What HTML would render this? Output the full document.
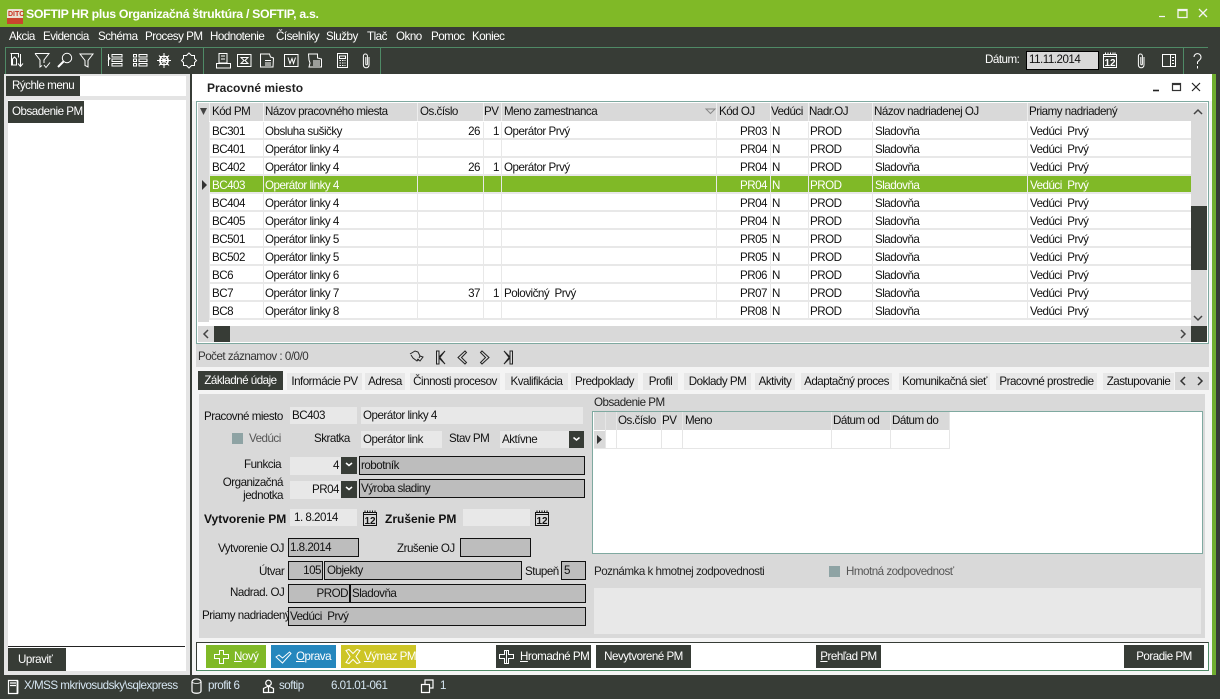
<!DOCTYPE html>
<html><head><meta charset="utf-8"><style>
*{box-sizing:border-box}
html,body{margin:0;padding:0}
body{width:1220px;height:699px;overflow:hidden;position:relative;background:#373c36;font:11.6px/16px "Liberation Sans",sans-serif;letter-spacing:-.5px;color:#111}
.a,.t{position:absolute}
.t{white-space:nowrap}
.w{color:#fff}
.d{background:#373c36;color:#fff;white-space:nowrap}
.r{text-align:right}
.bd{font-size:12px;font-weight:bold;letter-spacing:0}
.row{position:absolute;left:198px;width:993px;height:18px;background:#fff;border-bottom:2px solid #e8e8e8}
.row span{position:absolute;top:0;line-height:19px;white-space:pre}
.row .k{left:14px}.row .n{left:67px}.row .o{left:219px;width:63px;text-align:right}.row .p{left:285px;width:16px;text-align:right}.row .m{left:306px}
.row .c{left:519px;width:50px;text-align:right}.row .v{left:574px}.row .u{left:612px}.row .b{left:677px}.row .h{left:832px}
.row.s{background:#80b927;color:#fff;border-bottom-color:#e8e8e8}
.hd{position:absolute;top:103px;height:18px;line-height:17px;background:#d9d9d9;white-space:nowrap;padding-left:2px}
.tab{position:absolute;top:373px;height:17px;background:#e8e8e8;line-height:17px;text-align:center;white-space:nowrap}
.inp{position:absolute;background:#e8e8e8;height:17px;line-height:18px;padding:0 2px;white-space:nowrap}
.ro{position:absolute;background:#bdbdbd;border:1px solid #111;height:19px;line-height:17px;padding:0 1px;white-space:pre}
.lb{position:absolute;white-space:nowrap;text-align:right;line-height:16px}
.btn{position:absolute;top:645px;height:23px;line-height:23px;color:#fff;white-space:nowrap;text-align:center}
.btn u{text-decoration:underline}
svg{position:absolute;overflow:visible}
.s1{fill:none;stroke:#fff;stroke-width:1}
.s2{fill:none;stroke:#111;stroke-width:1}
.cal{font:bold 10px "Liberation Sans",sans-serif;letter-spacing:0;stroke:none}
</style></head><body>
<div class="a" style="left:0;top:0;width:1220px;height:27px;background:#80b927"></div>
<div class="a" style="left:7px;top:9px;width:16px;height:15px;background:#e8e3d2;border-radius:2px"></div>
<div class="a" style="left:7px;top:18px;width:16px;height:6px;background:#c9452e"></div>
<div class="t" style="left:8px;top:10px;font-size:7px;line-height:9px;font-weight:bold;letter-spacing:0;color:#c9301e">DITC</div>
<div class="t w" style="left:26px;top:6px;font-weight:bold;font-size:12.3px;letter-spacing:-.31px;line-height:16px">SOFTIP HR plus Organizačná štruktúra / SOFTIP, a.s.</div>
<svg style="left:0;top:0" width="1220" height="27"><path d="M1159 16.500h6M1178 9.500h9v8h-9zM1178 10.500h9" fill="none" stroke="#f4f4f4" stroke-width="1.300"/><path d="M1199 9l8 8M1207 9l-8 8" fill="none" stroke="#f4f4f4" stroke-width="1.300"/></svg>

<div class="t w" style="left:9px;top:29px">Akcia</div>
<div class="t w" style="left:43px;top:29px">Evidencia</div>
<div class="t w" style="left:98px;top:29px">Schéma</div>
<div class="t w" style="left:145px;top:29px">Procesy PM</div>
<div class="t w" style="left:210px;top:29px">Hodnotenie</div>
<div class="t w" style="left:276px;top:29px">Číselníky</div>
<div class="t w" style="left:326px;top:29px">Služby</div>
<div class="t w" style="left:367px;top:29px">Tlač</div>
<div class="t w" style="left:396px;top:29px">Okno</div>
<div class="t w" style="left:431px;top:29px">Pomoc</div>
<div class="t w" style="left:472px;top:29px">Koniec</div>

<div class="a" style="left:5px;top:47px;width:1203px;height:1px;background:#4f8a66"></div>
<div class="a" style="left:5px;top:47px;width:1px;height:27px;background:#4f8a66"></div>
<div class="a" style="left:101px;top:47px;width:1px;height:27px;background:#4f8a66"></div>
<div class="a" style="left:203px;top:47px;width:1px;height:27px;background:#4f8a66"></div>
<div class="a" style="left:380px;top:47px;width:1px;height:27px;background:#4f8a66"></div>
<div class="a" style="left:1183px;top:47px;width:1px;height:27px;background:#4f8a66"></div>

<svg style="left:0;top:0" width="400" height="74" class="s1">
<path d="M10.500 53.500h8v4M11.500 54v11h5V59l-2-2-2 2v6M20.500 54v12M18 63.500l2.500 3 2.500-3"/>
<path d="M35 53.500h14l-5 6.500v3M35 53.500l5 6.500v7l2-1.500M44 65l2 2.500 4-5"/>
<circle cx="67" cy="58" r="4.700"/><path d="M63.500 61.500l-5.500 5.500" stroke-width="2"/>
<path d="M80 54h13l-5 6.500V67l-3-1.500v-5z"/>
<path d="M112 54.500h10v2.500h-10zM112 59h10v2.500h-10zM112 63.500h10v2.500h-10zM108.500 54v12"/><path d="M108 56.500l2 2-2 2"/>
<path d="M133.500 54.500h3v2.500h-3zM139 54.500h8v2.500h-8zM133.500 59h3v2.500h-3zM139 59h8v2.500h-8zM133.500 63.500h3v2.500h-3zM139 63.500h8v2.500h-8z"/>
<path d="M164 53v15M157 60.500h14M159 55.500l10 10M169 55.500l-10 10"/><circle cx="164" cy="60.500" r="4.500"/><rect x="160.500" y="56.500" width="7" height="8"/>
<path d="M189 53l2.500 2.500h3v3l2 2-2 2v3h-3l-2.500 2.500-2.500-2.500h-3v-3l-2-2 2-2v-3h3z"/>
<path d="M219 53.500h8V63h-8zM216.500 63.500h14v4.500h-14z"/><path d="M221 56h4M221 59h4"/>
<path d="M237.500 54.500h13.500v12h-13.500zM241 57.500h7l-3 3 3 3h-7l3-3z"/>
<path d="M260.500 54h9l1 3 3 1-.5 9h-12.500zM265 63h6M265 60.500h6M265 65h6"/>
<path d="M284.500 54.500h13.500v12h-13.500zM288 57.500l2 6 2-5 1.500 5 2-6"/>
<path d="M308.500 54h9v4l4 1v8h-12.500l1-4-1-3zM313 61h7M313 63h7M313 65h7"/>
<path d="M337.500 53.500h10v14h-10zM339.500 56h6v2.500h-6zM339.500 60.500h1.500M342 60.500h1.500M344.500 60.500h1M339.500 63h1.500M342 63h1.500M344.500 63h1M339.500 65.500h1.500M342 65.500h1.500M344.500 65.500h1"/>
<path d="M369 57v8a2.800 2.800 0 0 1-5.600 0v-9a2 2 0 0 1 4 0v8a.8.800 0 0 1-1.600 0v-7"/>
</svg>

<div class="t w" style="left:985px;top:52px">Dátum:</div>
<div class="a" style="left:1026px;top:51px;width:73px;height:19px;background:#d9d9d9;border:1px solid #000;color:#111;line-height:15px;padding-left:2px">11.11.2014</div>
<svg style="left:0;top:0" width="1220" height="74" class="s1">
<path d="M1103.500 54.500h13v13h-13zM1105.500 52.500v2M1108 52.500v2M1110.500 52.500v2M1113 52.500v2M1115 52.500v2M1104 56.500h12"/>
<text x="1104.500" y="66" class="cal" fill="#fff">12</text>
<path d="M1144 57v8a2.800 2.800 0 0 1-5.600 0v-9a2 2 0 0 1 4 0v8a.8.800 0 0 1-1.600 0v-7"/>
<path d="M1162.500 54.500h13v12h-13zM1170.500 54.500v12M1172 57.500h2M1172 60.500h2M1172 63.500h2"/>
<path d="M1194 57a3.500 3.500 0 1 1 5.500 3l-2 2v2M1197.500 66v2.500"/>
</svg>

<!-- left panel -->
<div class="a" style="left:4px;top:74px;width:186px;height:601px;background:#e4e4e4"></div>
<div class="a" style="left:6px;top:76px;width:180px;height:20px;background:#fff"></div>
<div class="a d" style="left:6px;top:76px;width:74px;height:20px;line-height:20px;padding-left:6px">Rýchle menu</div>
<div class="a" style="left:8px;top:100px;width:178px;height:571px;background:#fff"></div>
<div class="a d" style="left:8px;top:101px;width:76px;height:22px;line-height:22px;padding-left:4px">Obsadenie PM</div>
<div class="a" style="left:8px;top:646px;width:177px;height:1px;background:#222"></div>
<div class="a d" style="left:8px;top:648px;width:58px;height:23px;line-height:23px;padding-left:10px">Upraviť</div>

<!-- right panel -->
<div class="a" style="left:192px;top:74px;width:1021px;height:601px;background:#f4f4f4"></div>
<div class="a" style="left:192px;top:74px;width:1020px;height:27px;background:#fff"></div>
<div class="a" style="left:1212px;top:74px;width:4px;height:601px;background:#6fae2f"></div>
<div class="t bd" style="left:207px;top:80px;color:#222">Pracovné miesto</div>
<svg style="left:0;top:0" width="1220" height="100" fill="none" stroke="#222" stroke-width="1.200"><path d="M1153 90.500h6" stroke-width="1.600"/><rect x="1172.500" y="83.500" width="8" height="7" stroke="#333"/><path d="M1172 84.500h9" stroke="#333"/><path d="M1192 83l8 8M1200 83l-8 8"/></svg>

<!-- grid -->
<div class="a" style="left:196px;top:101px;width:1013px;height:243px;border:1px solid #7fa9a0;background:#fff"></div>
<div class="a" style="left:198px;top:103px;width:1009px;height:18px;background:#d9d9d9"></div>
<div class="a" style="left:198px;top:103px;width:11px;height:219px;background:#d9d9d9"></div>
<div class="hd" style="left:210px;width:52px">Kód PM</div>
<div class="hd" style="left:263px;width:153px">Názov pracovného miesta</div>
<div class="hd" style="left:418px;width:64px">Os.číslo</div>
<div class="hd" style="left:484px;width:16px;padding-left:0">PV</div>
<div class="hd" style="left:502px;width:213px">Meno zamestnanca</div>
<div class="hd" style="left:717px;width:52px">Kód OJ</div>
<div class="hd" style="left:771px;width:36px;padding-left:0">Vedúci</div>
<div class="hd" style="left:809px;width:62px;padding-left:0">Nadr.OJ</div>
<div class="hd" style="left:873px;width:153px;padding-left:1px">Názov nadriadenej OJ</div>
<div class="hd" style="left:1028px;width:160px;padding-left:1px">Priamy nadriadený</div>
<svg style="left:0;top:0" width="1220" height="122">
<path d="M200 108h7l-3.500 7z" fill="#444"/>
<path d="M706 109h9l-4.500 4.500z" fill="none" stroke="#888"/>
<path d="M1194 114l4-4 4 4" fill="none" stroke="#444" stroke-width="1.500"/>
<path d="M209.500 103v18M263.500 103v18M417.500 103v18M483.500 103v18M501.500 103v18M716.500 103v18M770.500 103v18M808.500 103v18M872.500 103v18M1027.500 103v18" stroke="#eee"/>
</svg>

<div class="row" style="top:122px"><span class="k">BC301</span><span class="n">Obsluha sušičky</span><span class="o">26</span><span class="p">1</span><span class="m">Operátor Prvý</span><span class="c">PR03</span><span class="v">N</span><span class="u">PROD</span><span class="b">Sladovňa</span><span class="h">Vedúci  Prvý</span></div>
<div class="row" style="top:140px"><span class="k">BC401</span><span class="n">Operátor linky 4</span><span class="c">PR04</span><span class="v">N</span><span class="u">PROD</span><span class="b">Sladovňa</span><span class="h">Vedúci  Prvý</span></div>
<div class="row" style="top:158px"><span class="k">BC402</span><span class="n">Operátor linky 4</span><span class="o">26</span><span class="p">1</span><span class="m">Operátor Prvý</span><span class="c">PR04</span><span class="v">N</span><span class="u">PROD</span><span class="b">Sladovňa</span><span class="h">Vedúci  Prvý</span></div>
<div class="row s" style="top:176px"><span class="k">BC403</span><span class="n">Operátor linky 4</span><span class="c">PR04</span><span class="v">N</span><span class="u">PROD</span><span class="b">Sladovňa</span><span class="h">Vedúci  Prvý</span></div>
<div class="row" style="top:194px"><span class="k">BC404</span><span class="n">Operátor linky 4</span><span class="c">PR04</span><span class="v">N</span><span class="u">PROD</span><span class="b">Sladovňa</span><span class="h">Vedúci  Prvý</span></div>
<div class="row" style="top:212px"><span class="k">BC405</span><span class="n">Operátor linky 4</span><span class="c">PR04</span><span class="v">N</span><span class="u">PROD</span><span class="b">Sladovňa</span><span class="h">Vedúci  Prvý</span></div>
<div class="row" style="top:230px"><span class="k">BC501</span><span class="n">Operátor linky 5</span><span class="c">PR05</span><span class="v">N</span><span class="u">PROD</span><span class="b">Sladovňa</span><span class="h">Vedúci  Prvý</span></div>
<div class="row" style="top:248px"><span class="k">BC502</span><span class="n">Operátor linky 5</span><span class="c">PR05</span><span class="v">N</span><span class="u">PROD</span><span class="b">Sladovňa</span><span class="h">Vedúci  Prvý</span></div>
<div class="row" style="top:266px"><span class="k">BC6</span><span class="n">Operátor linky 6</span><span class="c">PR06</span><span class="v">N</span><span class="u">PROD</span><span class="b">Sladovňa</span><span class="h">Vedúci  Prvý</span></div>
<div class="row" style="top:284px"><span class="k">BC7</span><span class="n">Operátor linky 7</span><span class="o">37</span><span class="p">1</span><span class="m">Polovičný  Prvý</span><span class="c">PR07</span><span class="v">N</span><span class="u">PROD</span><span class="b">Sladovňa</span><span class="h">Vedúci  Prvý</span></div>
<div class="row" style="top:302px"><span class="k">BC8</span><span class="n">Operátor linky 8</span><span class="c">PR08</span><span class="v">N</span><span class="u">PROD</span><span class="b">Sladovňa</span><span class="h">Vedúci  Prvý</span></div>

<svg style="left:0;top:0" width="1220" height="322">
<path d="M209.500 122v198M263.500 122v198M417.500 122v198M483.500 122v198M501.500 122v198M716.500 122v198M770.500 122v198M808.500 122v198M872.500 122v198M1027.500 122v198" stroke="#e8e8e8"/>
<rect x="198" y="122" width="11" height="198" fill="#d9d9d9"/>
<path d="M202 180v10l5-5z" fill="#333"/>
</svg>

<div class="a" style="left:1191px;top:121px;width:16px;height:205px;background:#d9d9d9"></div>
<div class="a" style="left:1191px;top:206px;width:16px;height:64px;background:#373c36"></div>
<div class="a" style="left:198px;top:326px;width:993px;height:16px;background:#d9d9d9"></div>
<div class="a" style="left:214px;top:326px;width:16px;height:16px;background:#373c36"></div>
<div class="a" style="left:1191px;top:326px;width:16px;height:16px;background:#373c36"></div>
<svg style="left:0;top:0" width="1220" height="345" fill="none" stroke="#444" stroke-width="1.500"><path d="M1194 316l4 4 4-4M208 330l-4 4 4 4M1181 330l4 4-4 4"/></svg>

<!-- count bar -->
<div class="a" style="left:196px;top:344px;width:1013px;height:23px;background:#d9d9d9"></div>
<div class="t" style="left:198px;top:349px;color:#333">Počet záznamov : 0/0/0</div>
<svg style="left:0;top:0" width="1220" height="370" fill="none" stroke="#222" stroke-width="1">
<path d="M410 354l5-3 3 1 2 4-1 2M411 355l2 3 4 3 2-2M420 356l3 1-3 4-3-2"/>
<path d="M436.500 351v13h2.500v-6l6 6-5-6.500 5-6.500-6 6v-6z"/>
<path d="M465 351l-7 6.500 7 6.500 1.500-1.500-5-5 5-5z"/>
<path d="M482 351l7 6.500-7 6.500-1.500-1.500 5-5-5-5z"/>
<path d="M512.500 351v13H510v-6l-6 6 5-6.500-5-6.500 6 6v-6z"/>
</svg>

<!-- tabs -->
<div class="tab d" style="left:198px;top:371px;width:85px;height:19px;line-height:19px;background:#373c36">Základné údaje</div>
<div class="tab" style="left:287px;width:75px">Informácie PV</div>
<div class="tab" style="left:365px;width:40px">Adresa</div>
<div class="tab" style="left:410px;width:90px">Činnosti procesov</div>
<div class="tab" style="left:505px;width:63px">Kvalifikácia</div>
<div class="tab" style="left:571px;width:67px">Predpoklady</div>
<div class="tab" style="left:643px;width:35px">Profil</div>
<div class="tab" style="left:684px;width:67px">Doklady PM</div>
<div class="tab" style="left:755px;width:40px">Aktivity</div>
<div class="tab" style="left:801px;width:91px">Adaptačný proces</div>
<div class="tab" style="left:899px;width:91px">Komunikačná sieť</div>
<div class="tab" style="left:996px;width:101px">Pracovné prostredie</div>
<div class="tab" style="left:1103px;width:71px">Zastupovanie</div>
<div class="a" style="left:1175px;top:372px;width:34px;height:18px;background:#d9d9d9"></div>
<svg style="left:0;top:0" width="1220" height="392" fill="none" stroke="#333" stroke-width="1.500"><path d="M1185 377l-4 4 4 4M1198 377l4 4-4 4"/></svg>

<!-- content -->
<div class="a" style="left:199px;top:394px;width:1006px;height:244px;background:#d9d9d9"></div>
<div class="lb" style="left:204px;top:409px">Pracovné miesto</div>
<div class="inp" style="left:290px;top:407px;width:67px">BC403</div>
<div class="inp" style="left:361px;top:407px;width:222px">Operátor linky 4</div>
<div class="a" style="left:232px;top:433px;width:11px;height:11px;background:#8ea3a4"></div>
<div class="t" style="left:249px;top:431px;color:#555">Vedúci</div>
<div class="lb" style="left:314px;top:431px">Skratka</div>
<div class="inp" style="left:361px;top:431px;width:81px">Operátor link</div>
<div class="t" style="left:449px;top:431px">Stav PM</div>
<div class="inp" style="left:500px;top:431px;width:69px">Aktívne</div>
<div class="a" style="left:569px;top:431px;width:15px;height:17px;background:#373c36"></div>
<div class="lb" style="left:244px;top:457px">Funkcia</div>
<div class="inp r" style="left:290px;top:457px;width:51px;height:18px;line-height:18px;padding-right:2px">4</div>
<div class="a" style="left:341px;top:457px;width:16px;height:17px;background:#373c36"></div>
<div class="ro" style="left:359px;top:456px;width:226px">robotník</div>
<div class="lb" style="left:222px;top:476px;width:61px;line-height:13px;text-align:right">Organizačná<br>jednotka</div>
<div class="inp r" style="left:290px;top:481px;width:51px;height:18px;line-height:18px;padding-right:2px">PR04</div>
<div class="a" style="left:341px;top:481px;width:16px;height:17px;background:#373c36"></div>
<div class="ro" style="left:359px;top:479px;width:226px">Výroba sladiny</div>
<svg style="left:0;top:0" width="600" height="500" fill="none" stroke="#fff" stroke-width="1.500"><path d="M573.500 437.500l3 2.500 3-2.500M346 463l3 2.500 3-2.500M346 487l3 2.500 3-2.500"/></svg>

<div class="lb bd" style="left:204px;top:511px">Vytvorenie PM</div>
<div class="inp" style="left:290px;top:509px;width:67px;padding-left:4px">1. 8.2014</div>
<div class="lb bd" style="left:385px;top:511px">Zrušenie PM</div>
<div class="inp" style="left:463px;top:509px;width:67px"></div>
<svg style="left:0;top:0" width="600" height="530" class="s2">
<path d="M363.500 512.500h13v13h-13zM365 510.500v2M367.500 510.500v2M370 510.500v2M372.500 510.500v2M375 510.500v2M364 514.500h12"/>
<text x="364.500" y="524" class="cal" fill="#111">12</text>
<path d="M535.500 512.500h13v13h-13zM537 510.500v2M539.500 510.500v2M542 510.500v2M544.500 510.500v2M547 510.500v2M536 514.500h12"/>
<text x="536.500" y="524" class="cal" fill="#111">12</text>
</svg>

<div class="lb" style="left:218px;top:541px">Vytvorenie OJ</div>
<div class="ro" style="left:288px;top:538px;width:71px">1.8.2014</div>
<div class="lb" style="left:397px;top:541px">Zrušenie OJ</div>
<div class="ro" style="left:460px;top:538px;width:71px"></div>
<div class="lb" style="left:259px;top:564px">Útvar</div>
<div class="ro r" style="left:288px;top:561px;width:35px">105</div>
<div class="ro" style="left:324px;top:561px;width:198px;padding-left:2px">Objekty</div>
<div class="lb" style="left:525px;top:564px">Stupeň</div>
<div class="ro" style="left:561px;top:561px;width:25px;padding-left:2px">5</div>
<div class="lb" style="left:230px;top:585px">Nadrad. OJ</div>
<div class="ro r" style="left:288px;top:584px;width:62px;height:19px">PROD</div>
<div class="ro" style="left:350px;top:584px;width:236px">Sladovňa</div>
<div class="lb" style="left:202px;top:608px">Priamy nadriadený</div>
<div class="ro" style="left:288px;top:607px;width:298px">Vedúci  Prvý</div>

<div class="t" style="left:594px;top:395px;color:#222">Obsadenie PM</div>
<div class="a" style="left:592px;top:411px;width:611px;height:143px;background:#fff;border:1px solid #7fa9a0"></div>
<div class="a" style="left:594px;top:412px;width:356px;height:18px;background:#d9d9d9"></div>
<div class="t" style="left:618px;top:412px;line-height:17px">Os.číslo</div>
<div class="t" style="left:662px;top:412px;line-height:17px">PV</div>
<div class="t" style="left:685px;top:412px;line-height:17px">Meno</div>
<div class="t" style="left:833px;top:412px;line-height:17px">Dátum od</div>
<div class="t" style="left:892px;top:412px;line-height:17px">Dátum do</div>
<svg style="left:0;top:0" width="1000" height="460">
<rect x="594" y="431" width="11" height="17" fill="#d9d9d9"/>
<path d="M597 435v9l5-4.500z" fill="#333"/>
<path d="M605.500 412v36M616.500 412v36M661.500 412v36M682.500 412v36M831.500 412v36M890.500 412v36M949.500 412v36M594 448.500h356" stroke="#e6e6e6" fill="none"/>
</svg>

<div class="t" style="left:594px;top:564px;color:#222">Poznámka k hmotnej zodpovednosti</div>
<div class="a" style="left:829px;top:566px;width:11px;height:11px;background:#8ea3a4"></div>
<div class="t" style="left:846px;top:564px;color:#555">Hmotná zodpovednosť</div>
<div class="a" style="left:594px;top:588px;width:607px;height:46px;background:#e8e8e8"></div>

<!-- bottom buttons -->
<div class="a" style="left:196px;top:642px;width:1013px;height:29px;background:#fff;border:1px solid #373c36;border-right-color:#4f8a66;border-bottom-color:#4f8a66"></div>
<div class="btn" style="left:206px;width:60px;background:#80b927;padding-left:28px;text-align:left"><u>N</u>ový</div>
<div class="btn" style="left:271px;width:65px;background:#2587bd;padding-left:25px;text-align:left"><u>O</u>prava</div>
<div class="btn" style="left:341px;width:75px;background:#cdc526;padding-left:23px;text-align:left"><u>V</u>ýmaz PM</div>
<div class="btn" style="left:496px;width:95px;background:#373c36;padding-left:24px;text-align:left"><u>H</u>romadné PM</div>
<div class="btn" style="left:596px;width:95px;background:#373c36">Nevytvorené PM</div>
<div class="btn" style="left:816px;width:65px;background:#373c36"><u>P</u>rehľad PM</div>
<div class="btn" style="left:1124px;width:80px;background:#373c36">Poradie PM</div>
<svg style="left:0;top:0" width="600" height="680" class="s1">
<path d="M219.500 650.500h4v4h5v4h-5v5h-4v-5h-5v-4h5z"/>
<path d="M276 657l3-2 3.500 3 7-6 1.500 1.500-8.500 9.500z"/>
<path d="M346 650.500l3-1 4 4 4-4 3 1-4 6 4 6-3 1-4-4-4 4-3-1 4-6z"/>
<path d="M504.500 650.500h4v4h5v4h-5v5h-4v-5h-5v-4h5zM506.500 650v13"/>
</svg>

<!-- status -->
<svg style="left:0;top:0" width="500" height="699" fill="none" stroke="#fff" stroke-width="1.200">
<path d="M8.500 680.500h9v13h-9zM10 683h6M10 685.500h6"/><path d="M17.500 680.500v13" stroke-width="1.800"/>
<path d="M192 682c0-4 9-4 9 0v9c0 3-9 3-9 0z"/><path d="M192 682c2 2 7 2 9 0" stroke-width=".8"/>
<circle cx="268.500" cy="683" r="2.800"/><path d="M263.500 692.500v-4l5-2.500 5 2.500v4zM268.500 686v6.500"/>
<path d="M421.500 684.500h8v8h-8zM425 684v-4h8v8h-3.500"/>
</svg>
<div class="t" style="left:24px;top:678px;color:#d6e6f2">X/MSS mkrivosudsky\sqlexpress</div>
<div class="t" style="left:208px;top:678px;color:#d6e6f2">profit 6</div>
<div class="t" style="left:279px;top:678px;color:#d6e6f2">softip</div>
<div class="t" style="left:331px;top:678px;color:#d6e6f2">6.01.01-061</div>
<div class="t" style="left:440px;top:678px;color:#d6e6f2">1</div>
</body></html>
